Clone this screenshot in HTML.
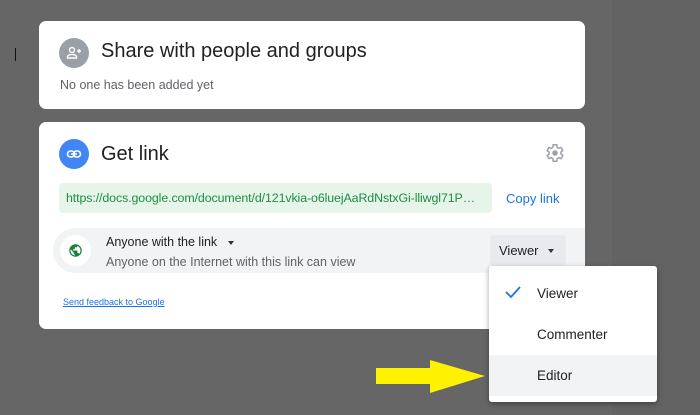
<!DOCTYPE html>
<html><head><style>
body{margin:0;width:700px;height:415px;background:#666;position:relative;overflow:hidden;font-family:"Liberation Sans",Arial,sans-serif}
.strip{position:absolute;left:612px;top:0;width:88px;height:415px;background:#636363}
.card{position:absolute;left:39px;width:546px;background:#fff;border-radius:7px}
.abs{position:absolute}
</style></head><body>
<div class="strip"></div>
<div class="abs" style="left:15px;top:48px;width:1px;height:13px;background:#111"></div>
<div class="card" style="top:21px;height:88px">
 <div class="abs" style="left:20px;top:17px;width:30px;height:30px;border-radius:50%;background:#9aa0a6"></div>
 <svg class="abs" style="left:27px;top:24px" width="16" height="16" viewBox="0 0 16 16"><circle cx="6" cy="5" r="2.5" fill="none" stroke="#fff" stroke-width="1.4"/><path d="M1.5 13v-1c0-1.8 3-2.6 4.5-2.6S10.5 10.2 10.5 12v1z" fill="none" stroke="#fff" stroke-width="1.4"/><path d="M11 6h4M13 4v4" stroke="#fff" stroke-width="1.4"/></svg>
 <div class="abs" style="left:62px;top:19px;font-size:20px;color:#202124">Share with people and groups</div>
 <div class="abs" style="left:21px;top:57px;font-size:12.5px;color:#5f6368">No one has been added yet</div>
</div>
<div class="card" style="top:122px;height:207px">
 <div class="abs" style="left:20px;top:17px;width:30px;height:30px;border-radius:50%;background:#4285f4"></div>
 <svg class="abs" style="left:27px;top:25px" width="16" height="14" viewBox="0 0 16 14"><rect x="1.5" y="4" width="7" height="6" rx="3" fill="none" stroke="#fff" stroke-width="1.6"/><rect x="7.5" y="4" width="7" height="6" rx="3" fill="none" stroke="#fff" stroke-width="1.6"/><path d="M5 7h6" stroke="#fff" stroke-width="1.6"/></svg>
 <div class="abs" style="left:62px;top:21px;font-size:20px;color:#202124">Get link</div>
 <svg class="abs" style="left:505px;top:20px" width="22" height="22" viewBox="0 0 24 24"><path fill="none" stroke="#9aa0a6" stroke-width="1.6" d="M19.4 13a7.5 7.5 0 0 0 0-2l2.1-1.6-2-3.5-2.5 1a7 7 0 0 0-1.7-1L15 3h-4l-.4 2.9a7 7 0 0 0-1.7 1l-2.5-1-2 3.5L6.6 11a7.5 7.5 0 0 0 0 2l-2.1 1.6 2 3.5 2.5-1a7 7 0 0 0 1.7 1L11 21h4l.4-2.9a7 7 0 0 0 1.7-1l2.5 1 2-3.5z" transform="translate(-1 0)"/><circle cx="12" cy="12" r="3" fill="#9aa0a6"/></svg>
 <div class="abs" style="left:20px;top:61px;width:433px;height:30px;background:#e6f4ea;border-radius:4px"></div>
 <div class="abs" style="left:27px;top:69px;font-size:12.4px;letter-spacing:-0.1px;color:#1e8e3e;white-space:nowrap">https://docs.google.com/document/d/121vkia-o6luejAaRdNstxGi-lliwgl71P…</div>
 <div class="abs" style="left:467px;top:69px;font-size:13px;color:#1a73e8">Copy link</div>
 <div class="abs" style="left:14px;top:106px;width:532px;height:45px;background:#f1f3f4;border-radius:23px 0 0 23px"></div>
 <div class="abs" style="left:21px;top:113px;width:31px;height:31px;border-radius:50%;background:#fff"></div>
 <svg class="abs" style="left:29px;top:121px" width="15" height="15" viewBox="0 0 24 24"><path fill="#188038" d="M12 2a10 10 0 1 0 0 20 10 10 0 0 0 0-20zm-1 17.9A8 8 0 0 1 4.2 10.2L9 15v1a2 2 0 0 0 2 2zm6.9-2.5A2 2 0 0 0 16 16h-1v-3a1 1 0 0 0-1-1H8v-2h2a1 1 0 0 0 1-1V7h2a2 2 0 0 0 2-2v-.4a8 8 0 0 1 2.9 12.8z"/></svg>
 <div class="abs" style="left:67px;top:113px;font-size:12.5px;color:#202124">Anyone with the link</div>
 <div class="abs" style="left:189px;top:119px;width:0;height:0;border-left:3.5px solid transparent;border-right:3.5px solid transparent;border-top:4px solid #333"></div>
 <div class="abs" style="left:67px;top:133px;font-size:12.5px;color:#5f6368">Anyone on the Internet with this link can view</div>
 <div class="abs" style="left:451px;top:113px;width:76px;height:31px;background:#e8eaed;border-radius:4px"></div>
 <div class="abs" style="left:460px;top:121px;font-size:13px;color:#202124">Viewer</div>
 <div class="abs" style="left:509px;top:127px;width:0;height:0;border-left:3.5px solid transparent;border-right:3.5px solid transparent;border-top:4px solid #333"></div>
 <div class="abs" style="left:24px;top:175px;font-size:9px;color:#1a73e8;text-decoration:underline">Send feedback to Google</div>
</div>
<div class="abs" style="left:489px;top:266px;width:168px;height:136px;background:#fff;border-radius:3px;box-shadow:0 2px 6px rgba(0,0,0,.35)">
 <div class="abs" style="left:0;top:89px;width:168px;height:41px;background:#f1f3f4"></div>
 <svg class="abs" style="left:15px;top:19px" width="18" height="14" viewBox="0 0 18 14"><path d="M2 7l5 5L16 2" fill="none" stroke="#1a73e8" stroke-width="1.8"/></svg>
 <div class="abs" style="left:48px;top:20px;font-size:13.5px;color:#202124">Viewer</div>
 <div class="abs" style="left:48px;top:61px;font-size:13.5px;color:#202124">Commenter</div>
 <div class="abs" style="left:48px;top:102px;font-size:13.5px;color:#202124">Editor</div>
</div>
<svg class="abs" style="left:0;top:0" width="700" height="415"><path d="M376 368H430V360L485 376L430 393V384H376Z" fill="#fff200"/></svg>
</body></html>
